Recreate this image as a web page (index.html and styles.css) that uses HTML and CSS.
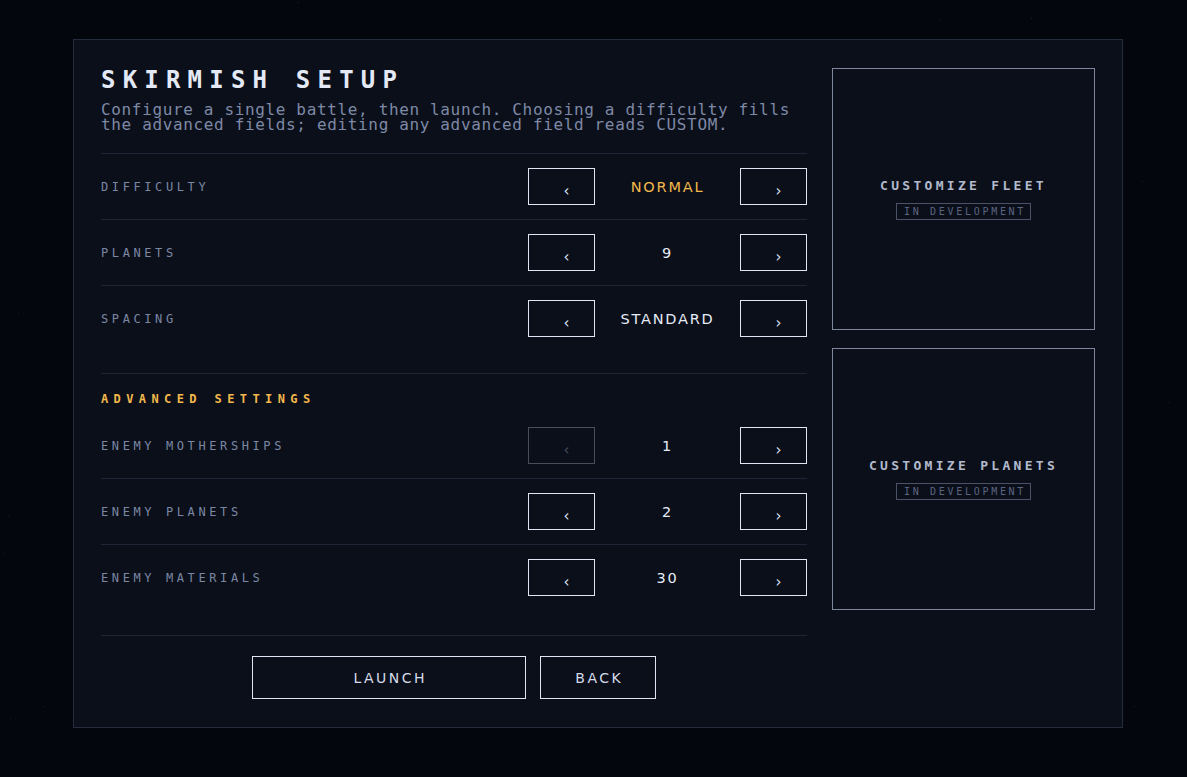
FILE: index.html
```html
<!DOCTYPE html>
<html lang="en">
<head>
  <meta charset="UTF-8">
  <meta name="viewport" content="width=device-width, initial-scale=1.0">
  <title>Skirmish Setup</title>
  <link rel="stylesheet" href="styles.css">
</head>
<body>

  <div class="stars"></div>

  <main class="panel">
    <section class="setup">
      <h1>Skirmish Setup</h1>
      <p class="intro">Configure a single battle, then launch. Choosing a difficulty fills<br>the advanced fields; editing any advanced field reads CUSTOM.</p>

      <div class="group">
        <div class="row">
          <span class="label">Difficulty</span>
          <div class="stepper">
            <button class="step">&lsaquo;</button>
            <span class="value gold">NORMAL</span>
            <button class="step">&rsaquo;</button>
          </div>
        </div>
        <div class="row">
          <span class="label">Planets</span>
          <div class="stepper">
            <button class="step">&lsaquo;</button>
            <span class="value">9</span>
            <button class="step">&rsaquo;</button>
          </div>
        </div>
        <div class="row">
          <span class="label">Spacing</span>
          <div class="stepper">
            <button class="step">&lsaquo;</button>
            <span class="value">STANDARD</span>
            <button class="step">&rsaquo;</button>
          </div>
        </div>
      </div>

      <div class="group advanced">
        <h2>Advanced Settings</h2>
        <div class="row">
          <span class="label">Enemy Motherships</span>
          <div class="stepper">
            <button class="step" disabled>&lsaquo;</button>
            <span class="value">1</span>
            <button class="step">&rsaquo;</button>
          </div>
        </div>
        <div class="row">
          <span class="label">Enemy Planets</span>
          <div class="stepper">
            <button class="step">&lsaquo;</button>
            <span class="value">2</span>
            <button class="step">&rsaquo;</button>
          </div>
        </div>
        <div class="row">
          <span class="label">Enemy Materials</span>
          <div class="stepper">
            <button class="step">&lsaquo;</button>
            <span class="value">30</span>
            <button class="step">&rsaquo;</button>
          </div>
        </div>
      </div>

      <div class="actions">
        <button class="action launch">Launch</button>
        <button class="action back">Back</button>
      </div>
    </section>

    <aside class="side">
      <div class="card">
        <h3>Customize Fleet</h3>
        <span class="badge">In Development</span>
      </div>
      <div class="card">
        <h3>Customize Planets</h3>
        <span class="badge">In Development</span>
      </div>
    </aside>
  </main>

</body>
</html>
```

FILE: styles.css
```css
* {
  margin: 0;
  padding: 0;
  box-sizing: border-box;
}

body {
  min-height: 100vh;
  padding: 39px 0 0 73px;
  background: #03060d;
  font-family: "DejaVu Sans Mono", monospace;
  color: #dfe4f0;
  overflow: hidden;
}

/* faint starfield behind the panel */
.stars {
  position: fixed;
  top: 0;
  left: 0;
  width: 1px;
  height: 1px;
  box-shadow:
    298px 2px #1a2030,
    940px 20px #161c2b,
    1031px 18px #1a2030,
    1142px 181px #161c2b,
    1168px 402px #141a28,
    18px 313px #141a28,
    8px 516px #141a28,
    4px 553px #141a28,
    44px 706px #161c2b,
    10px 718px #141a28,
    1134px 706px #161c2b,
    1088px 40px #141a28;
}

.panel {
  position: relative;
  width: 1050px;
  display: grid;
  grid-template-columns: 706px 263px;
  gap: 25px;
  padding: 28px 27px 28px 27px;
  background: #0a0f1a;
  border: 1px solid #252c3d;
}

h1 {
  font-size: 24px;
  line-height: 24px;
  font-weight: bold;
  letter-spacing: 0.3em;
  text-transform: uppercase;
  color: #e4e9f6;
}

.intro {
  margin: 10px 0 21px;
  font-size: 16px;
  line-height: 15px;
  letter-spacing: 0.65px;
  color: #7e89a6;
}

.group {
  border-top: 1px solid #1e2536;
}

.advanced {
  margin-top: 22px;
}

h2 {
  padding: 19px 0 8px;
  font-size: 12px;
  line-height: 12px;
  font-weight: bold;
  letter-spacing: 0.45em;
  text-transform: uppercase;
  color: #f2b84b;
}

.row {
  display: flex;
  align-items: center;
  justify-content: space-between;
  height: 66px;
  border-bottom: 1px solid #1e2536;
}

.row:last-child {
  height: 65px;
  border-bottom: none;
}

.label {
  font-size: 12px;
  letter-spacing: 0.3em;
  text-transform: uppercase;
  color: #7c87a4;
}

.stepper {
  display: flex;
  align-items: center;
}

.step {
  width: 67px;
  height: 37px;
  padding: 10px 0 0 10px;
  background: transparent;
  border: 1px solid #dfe5f4;
  color: #dfe5f4;
  font-family: "DejaVu Sans", sans-serif;
  font-size: 15px;
  line-height: 15px;
  cursor: pointer;
}

.step:disabled {
  border-color: #474d5b;
  color: #474d5b;
  cursor: default;
}

.value {
  width: 145px;
  text-align: center;
  font-family: "DejaVu Sans", sans-serif;
  font-size: 14.5px;
  letter-spacing: 1.8px;
  color: #e6ebf6;
}

.value.gold {
  color: #f2b84b;
}

.actions {
  display: flex;
  justify-content: center;
  gap: 14px;
  margin-top: 25px;
  padding-top: 20px;
  border-top: 1px solid #1e2536;
}

.action {
  height: 43px;
  padding-left: 2.5px;
  background: transparent;
  border: 1px solid #dfe5f4;
  color: #d5dbea;
  font-family: "DejaVu Sans", sans-serif;
  font-size: 14px;
  letter-spacing: 2.5px;
  text-transform: uppercase;
  cursor: pointer;
}

.launch {
  width: 274px;
}

.back {
  width: 116px;
}

.side {
  display: flex;
  flex-direction: column;
  gap: 18px;
}

.card {
  height: 262px;
  display: flex;
  flex-direction: column;
  align-items: center;
  justify-content: center;
  border: 1px solid #7d869c;
}

h3 {
  font-size: 13px;
  line-height: 13px;
  font-weight: bold;
  letter-spacing: 3.3px;
  text-transform: uppercase;
  color: #b3bacb;
}

.badge {
  margin-top: 11px;
  padding: 0 4px 0 7px;
  font-size: 10px;
  line-height: 15px;
  letter-spacing: 2.7px;
  text-transform: uppercase;
  color: #5b6480;
  border: 1px solid #4a5268;
}
```
